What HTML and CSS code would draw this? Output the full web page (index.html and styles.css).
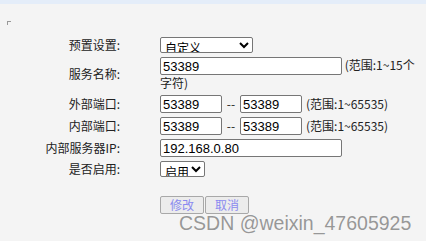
FILE: index.html
```html
<!DOCTYPE html>
<html lang="zh">
<head>
    <meta charset="UTF-8">
    <title>端口映射</title>
    <link rel="stylesheet" href="styles.css">
</head>
<body>
    <div class="topbar"></div>
    <div class="page">
        <span class="broken-img"></span>

        <div class="form">
            <label class="label">预置设置:</label>
            <div class="field">
                <select class="select preset">
                    <option>自定义</option>
                </select>
            </div>

            <label class="label">服务名称:</label>
            <div class="field wrap">
                <input class="input wide" type="text" value="53389"> <span class="hint">(范围:1~15个字符)</span>
            </div>

            <label class="label">外部端口:</label>
            <div class="field">
                <input class="input port" type="text" value="53389">
                <span class="dash">--</span>
                <input class="input port" type="text" value="53389">
                <span class="hint">(范围:1~65535)</span>
            </div>

            <label class="label">内部端口:</label>
            <div class="field">
                <input class="input port" type="text" value="53389">
                <span class="dash">--</span>
                <input class="input port" type="text" value="53389">
                <span class="hint">(范围:1~65535)</span>
            </div>

            <label class="label">内部服务器IP:</label>
            <div class="field">
                <input class="input wide" type="text" value="192.168.0.80">
            </div>

            <label class="label">是否启用:</label>
            <div class="field">
                <select class="select enable">
                    <option>启用</option>
                </select>
            </div>
        </div>

        <div class="buttons">
            <button class="btn">修改</button><button class="btn">取消</button>
        </div>
    </div>

    <div class="watermark">CSDN @weixin_47605925</div>
</body>
</html>
```

FILE: styles.css
```css
body {
    margin: 0;
    background: #f4f4f4;
    font-family: "Noto Sans CJK SC", "Liberation Sans", sans-serif;
    font-size: 12px;
    color: #222;
}

.topbar {
    height: 4px;
    background: #e4edf9;
}

.page {
    position: relative;
    padding-top: 33px;
}

/* broken image marker */
.broken-img {
    position: absolute;
    top: 17px;
    left: 7px;
    width: 3px;
    height: 3px;
    border-top: 1px solid #999;
    border-left: 1px solid #999;
}

.form {
    display: grid;
    grid-template-columns: 80px 266px;
    column-gap: 40px;
    row-gap: 4px;
    padding-left: 40px;
    align-items: center;
}

.label {
    text-align: right;
    line-height: 16px;
}

.field {
    display: flex;
    align-items: center;
    line-height: 16px;
}

.field.wrap {
    display: block;
}

.input {
    box-sizing: border-box;
    height: 18px;
    padding: 0 2px;
    border: 1px solid #767676;
    border-radius: 2px;
    background: #fff;
    font-family: "Liberation Sans", "Noto Sans CJK SC", sans-serif;
    font-size: 13px;
    color: #000;
    vertical-align: top;
}

.input.wide {
    width: 182px;
}

.input.port {
    width: 62px;
}

.dash {
    width: 18px;
    text-align: center;
}

.hint {
    margin-left: 4px;
    font-size: 12px;
}

.wrap .hint {
    margin-left: 0;
}

.select {
    box-sizing: border-box;
    height: 16px;
    padding: 0;
    border: 1px solid #767676;
    border-radius: 2px;
    background: #fff;
    font-family: "Noto Sans CJK SC", sans-serif;
    font-size: 12px;
    color: #000;
}

.select.preset {
    width: 93px;
}

.select.enable {
    width: 45px;
}

.buttons {
    padding: 19px 0 0 160px;
}

.btn {
    width: 44px;
    height: 18px;
    margin-right: 1px;
    padding: 0;
    border: 1px solid #a8a8a8;
    border-radius: 2px;
    background: #ececec;
    color: #8a8af0;
    font-family: "Noto Sans CJK SC", sans-serif;
    font-size: 12px;
    line-height: 14px;
}

.watermark {
    position: absolute;
    left: 179px;
    top: 214px;
    font-family: "Liberation Sans", sans-serif;
    font-size: 19.5px;
    line-height: 18px;
    color: rgba(120, 120, 120, 0.75);
    white-space: nowrap;
}
```
